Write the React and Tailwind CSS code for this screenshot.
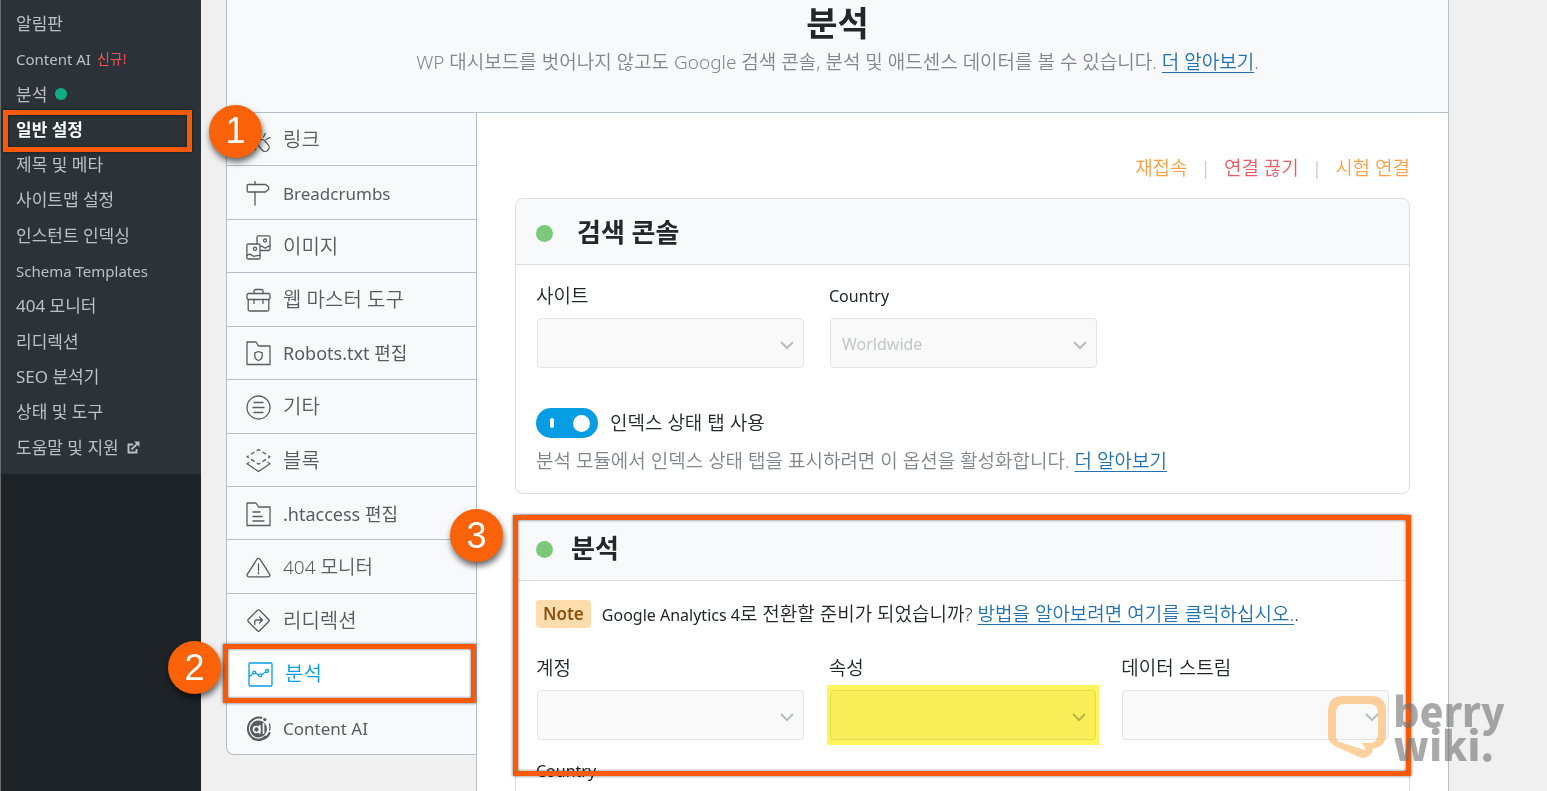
import React from 'react';

const submenu = [
  { label: '알림판' },
  { label: 'Content AI', latin: true, isNew: true },
  { label: '분석', dot: true },
  { label: '일반 설정', active: true },
  { label: '제목 및 메타' },
  { label: '사이트맵 설정' },
  { label: '인스턴트 인덱싱' },
  { label: 'Schema Templates', latin: true },
  { label: '404 모니터' },
  { label: '리디렉션' },
  { label: 'SEO 분석기' },
  { label: '상태 및 도구' },
  { label: '도움말 및 지원', external: true },
];

const tabs = [
  { label: '링크', icon: 'link', size: 'text-[20px] font-[350]' },
  { label: 'Breadcrumbs', icon: 'signpost', size: 'text-[17px]' },
  { label: '이미지', icon: 'images', size: 'text-[20px] font-[350]' },
  { label: '웹 마스터 도구', icon: 'toolbox', size: 'text-[20px] font-[350]' },
  { label: 'Robots.txt 편집', icon: 'robots', size: 'text-[18px]' },
  { label: '기타', icon: 'misc', size: 'text-[20px] font-[350]' },
  { label: '블록', icon: 'blocks', size: 'text-[20px] font-[350]' },
  { label: '.htaccess 편집', icon: 'htaccess', size: 'text-[18px]' },
  { label: '404 모니터', icon: 'warning', size: 'text-[19px] font-[350]' },
  { label: '리디렉션', icon: 'redirect', size: 'text-[20px] font-[350]' },
  { label: '분석', icon: 'analytics', size: 'text-[20px] font-[350]', active: true },
  { label: 'Content AI', icon: 'ai', size: 'text-[17px]' },
];

const iconShapes = {
  link: (
    <>
      <rect x="13.500" y="11" width="8" height="13" rx="4" transform="rotate(-40 17.500 17.500)" />
      <path d="M17.500 9l1.800-3.500M20 11.500l4-1.800M9 17v5" />
    </>
  ),
  signpost: (
    <>
      <path d="M9 .5v3M9 11v13" />
      <path d="M2.200 3.500h17.300L22.600 6v2.500L19.500 11H2.200a1 1 0 0 1-1-1V4.500a1 1 0 0 1 1-1z" />
    </>
  ),
  images: (
    <>
      <path d="M11 8.500V2.200A1.300 1.300 0 0 1 12.300.900h10.400A1.300 1.300 0 0 1 24 2.200v12a1.300 1.300 0 0 1-1.300 1.300H14.500" />
      <circle cx="19" cy="5.500" r="1.500" />
      <path d="M14.500 11.500c1.500-1.500 3 1.500 4.500 1.500s2.500-2 5-2" />
      <rect x=".9" y="9" width="13.100" height="15" rx="1.300" />
      <circle cx="9" cy="13.800" r="1.600" />
      <path d="M1 20.500c2.500-3 4.500-.5 6 .5s3.500-1 7-.5" />
    </>
  ),
  toolbox: (
    <>
      <path d="M8 5.500V3.200C8 2 8.500 1.500 9.500 1.500h6c1 0 1.500.5 1.500 1.700v2.300" />
      <rect x="1" y="5.500" width="23" height="6" rx="1.500" />
      <path d="M2.200 11.500v10c0 1 .5 1.500 1.500 1.500h17.600c1 0 1.500-.5 1.500-1.500v-10M8 11.500v4M17 11.500v4" />
    </>
  ),
  robots: (
    <>
      <path d="M1 23.500V1h9l2.500 4H24v18.500z" />
      <path d="M12.500 10.500l3.700 1.300v3.500c0 2-1.700 3.400-3.700 4.200-2-.8-3.700-2.200-3.700-4.200v-3.500z" />
    </>
  ),
  misc: (
    <>
      <circle cx="12.500" cy="12.500" r="11.500" />
      <path d="M8 7.500h9M7 12.500h11M8 17.500h9" />
    </>
  ),
  blocks: (
    <>
      <path d="M12.500 1.500L24 8.800l-11.500 7.400L1 8.800z" strokeDasharray="4.200 2.600" strokeDashoffset="2" strokeLinecap="butt" />
      <path d="M3 14.500l-2 1.300 11.500 7.700L24 15.800l-2-1.300" />
    </>
  ),
  htaccess: (
    <>
      <path d="M1 23.500V1h9l2.500 4H24v18.500z" />
      <path d="M7 10h7M7 14.500h9M7 19h11" />
    </>
  ),
  warning: (
    <>
      <path d="M10.900 4.300c.8-1.300 2.400-1.300 3.200 0l9.500 14.800c.8 1.300 0 2.700-1.500 2.700H2.900c-1.500 0-2.300-1.400-1.500-2.700z" />
      <path d="M12.500 9v6.500M12.500 17.200v1.600" />
    </>
  ),
  redirect: (
    <>
      <rect x="4.500" y="4.500" width="16" height="16" rx="1.500" transform="rotate(45 12.500 12.500)" />
      <path d="M8.800 16.500V13.500c0-1 .5-1.500 1.500-1.500h6M13.500 9l3 3-3 3" />
    </>
  ),
  analytics: (
    <>
      <rect x="1" y="1" width="23" height="23" rx="1" />
      <path d="M1.500 14.500l3.700-3M7.500 11l3.200 2M13.800 12.500l4-2.500" />
      <circle cx="6.300" cy="10.500" r="1.400" />
      <circle cx="12.300" cy="13.300" r="1.500" />
      <circle cx="19" cy="9" r="1.500" />
    </>
  ),
  ai: (
    <>
      <path d="M15.500 1.800A11.200 11.200 0 1 0 23.500 17" strokeWidth="2" />
      <path d="M23.400 8a11.500 11.500 0 0 1 .3 6" />
      <circle cx="12.500" cy="13" r="8.500" fill="currentColor" stroke="none" />
      <circle cx="18.800" cy="3.600" r="1.700" fill="currentColor" stroke="none" />
      <circle cx="10.500" cy="13.500" r="3" stroke="#f8f9fb" strokeWidth="1.700" />
      <path d="M13.800 10v7M17.500 11v6M17.500 8v1.500" stroke="#f8f9fb" strokeWidth="1.800" />
      <path d="M7 22.500c4 1.800 9 1.300 12.500-2" strokeWidth="2" />
    </>
  ),
};

const TabIcon = ({ name }) => (
  <svg
    viewBox="0 0 25 25"
    className="size-[25px] shrink-0"
    fill="none"
    stroke="currentColor"
    strokeWidth="1.3"
    strokeLinecap="round"
    strokeLinejoin="round"
    aria-hidden="true"
  >
    {iconShapes[name]}
  </svg>
);

const Badge = ({ number, className }) => (
  <span
    className={`absolute z-20 flex size-[53px] items-center justify-center rounded-full bg-[#f96209] font-['Liberation_Sans',sans-serif] text-[36px] leading-none font-normal text-white shadow-[1px_4px_6px_rgba(0,0,0,0.6)] ${className}`}
  >
    {number}
  </span>
);

const Outline = ({ className }) => (
  <span
    className={`pointer-events-none absolute z-10 border-5 border-[#f95a08] shadow-[0_0_3px_rgba(0,0,0,0.6),inset_0_0_3px_rgba(0,0,0,0.6)] ${className}`}
  />
);

const Sidebar = () => (
  <aside className="w-[201px] shrink-0 border-l border-[#6b6b6b] bg-[#1d2327]">
    <ul className="grid h-[474px] auto-rows-fr bg-[#2c3338] pt-[6px] pb-[9px]">
      {submenu.map((item) => (
        <li key={item.label} className="relative flex items-center pl-[15px]">
          <a
            href="#"
            className={`flex items-center whitespace-nowrap ${item.latin ? 'text-[15px]' : 'text-[17px]'} ${
              item.active ? 'font-bold text-white' : 'text-[#bcc0c4]'
            }`}
          >
            {item.label}
            {item.isNew && <span className="ml-1.5 text-[14px] text-[#f0545a]">신규!</span>}
            {item.dot && <span className="ml-2 size-3 rounded-full bg-[#10ac84]" />}
            {item.external && (
              <svg viewBox="0 0 13 13" className="ml-2 size-[13px]" fill="none" stroke="currentColor" strokeWidth="1.900" aria-hidden="true">
                <path d="M6 3.500H1.500v8h8V8" />
                <path d="M4.500 8.500L11 2" />
                <path d="M7 .5h5.500V6z" fill="currentColor" stroke="none" />
              </svg>
            )}
          </a>
          {item.active && (
            <>
              <Outline className="-top-[2px] right-[9px] -bottom-[5px] left-[2px]" />
              <Badge number="1" className="-top-[7px] -right-[61px]" />
            </>
          )}
        </li>
      ))}
    </ul>
  </aside>
);

const SettingsTabs = () => (
  <nav className="w-[250px] shrink-0">
    <ul className="grid h-[642px] auto-rows-fr rounded-bl-lg border-b border-l border-[#b5bfc9] bg-[#f8f9fb]">
      {tabs.map((tab) => (
        <li
          key={tab.label}
          className={`relative border-b border-[#b5bfc9] last:border-b-0 ${
            tab.active ? 'bg-white text-[#069de3]' : 'text-[#5a5b60]'
          }`}
        >
          <a
            href="#"
            className={`flex h-full items-center gap-3 pt-[2px] whitespace-nowrap ${tab.size} ${
              tab.active ? 'pl-[21px]' : 'pl-[19px]'
            }`}
          >
            <TabIcon name={tab.icon} />
            {tab.label}
          </a>
          {tab.active && (
            <>
              <Outline className="-inset-y-[3px] right-0 -left-[4px]" />
              <Badge number="2" className="-top-[6px] -left-[59px]" />
            </>
          )}
        </li>
      ))}
    </ul>
  </nav>
);

const SelectField = ({ id, label, value, latin, highlighted }) => (
  <div className="w-[268px]">
    <label htmlFor={id} className={`block leading-[30px] ${latin ? 'text-[16px] font-normal' : 'text-[19px]'}`}>
      {label}
    </label>
    <div className="relative mt-[7px] ml-px">
      <select
        id={id}
        disabled
        className="h-[50px] w-full appearance-none rounded border border-[#e3e4e6] bg-[#f9f9f9] px-[11px] pt-[2px] text-[16px] font-normal text-[#c4c6c8] opacity-100"
      >
        <option>{value || ''}</option>
      </select>
      <svg
        viewBox="0 0 14 9"
        className="pointer-events-none absolute top-[23px] right-[10px] h-[9px] w-[14px]"
        fill="none"
        stroke="#b9bcbf"
        strokeWidth="2"
        aria-hidden="true"
      >
        <path d="M1 1l6 6 6-6" />
      </svg>
      {highlighted && (
        <span className="pointer-events-none absolute -inset-x-[3px] -inset-y-[5px] bg-[#fff45a] mix-blend-multiply" />
      )}
    </div>
  </div>
);

const PanelHeader = ({ title, className }) => (
  <div className="flex h-[66px] items-center rounded-t-lg border-b border-[#dadde0] bg-[#f8f9fb] pt-1 pl-5">
    <span className="size-[17px] rounded-full bg-[#7ac97a]" />
    <h2 className={`pb-1 text-[26px] leading-none font-bold text-[#23262a] ${className}`}>{title}</h2>
  </div>
);

const link = 'text-[#2271b1] underline underline-offset-3';

const SearchConsolePanel = () => (
  <section className="rounded-lg border border-[#dadde0]">
    <PanelHeader title="검색 콘솔" className="ml-6" />
    <div className="px-5 pt-[16px] pb-[17px]">
      <div className="flex flex-wrap gap-[25px]">
        <SelectField id="console-site" label="사이트" />
        <SelectField id="console-country" label="Country" value="Worldwide" latin />
      </div>
      <label className="mt-10 flex h-[30px] items-center gap-3">
        <input
          type="checkbox"
          role="switch"
          defaultChecked
          className="relative h-[30px] w-[62px] appearance-none rounded-full bg-[#069de3] before:absolute before:top-[10px] before:left-[14px] before:h-[10px] before:w-1 before:rounded-sm before:bg-white after:absolute after:top-[7px] after:right-2 after:size-[17px] after:rounded-full after:bg-white"
        />
        인덱스 상태 탭 사용
      </label>
      <p className="mt-2 leading-[30px] text-[#7f868d]">
        분석 모듈에서 인덱스 상태 탭을 표시하려면 이 옵션을 활성화합니다.{' '}
        <a href="#" className={link}>더 알아보기</a>
      </p>
    </div>
  </section>
);

const AnalyticsPanel = () => (
  <section className="relative mt-5 rounded-lg border border-[#dadde0]">
    <PanelHeader title="분석" className="ml-[18px]" />
    <div className="px-5 pt-[18px] pb-10">
      <p className="flex h-[30px] items-center">
        <span className="mr-[11px] rounded bg-[#ffdcae] px-[7px] text-[17px] leading-7 font-semibold text-[#8a5210]">Note</span>
        <span>
          <span className="text-[16px] font-normal">Google Analytics 4</span>로 전환할 준비가 되었습니까?{' '}
          <a href="#" className={link}>방법을 알아보려면 여기를 클릭하십시오.</a>.
        </span>
      </p>
      <div className="mt-[24px] flex gap-[25px]">
        <SelectField id="ga-account" label="계정" />
        <SelectField id="ga-property" label="속성" highlighted />
        <SelectField id="ga-stream" label="데이터 스트림" />
      </div>
      <div className="mt-4">
        <SelectField id="ga-country" label="Country" value="Worldwide" latin />
      </div>
    </div>
    <Outline className="top-0 -right-[2px] -left-[3px] h-[261px]" />
    <Badge number="3" className="-top-[6px] -left-[66px]" />
  </section>
);

const Watermark = () => (
  <div className="pointer-events-none absolute right-[42px] bottom-[30px] z-30 flex items-center gap-[7px]">
    <svg viewBox="0 0 58 62" className="h-[62px] w-[58px]" fill="#ffab4f" fillOpacity="0.55" fillRule="evenodd" aria-hidden="true">
      <path d="M15 0h28q15 0 15 15v23q0 13-13 14.500-1 6.500-7 9-3 1-7-.5L11 52Q0 48 0 40V15Q0 0 15 0zM17 8q-9 0-9 9v24q0 3 4 5l26 8.500q-1-4-4.500-7.500H40q10 0 10-10V17q0-9-9-9z" />
    </svg>
    <p className="font-['Noto_Sans_CJK_KR',sans-serif] text-[40px] leading-[34px] font-black text-[#6f7072]/60">
      berry
      <br />
      wiki.
    </p>
  </div>
);

const App = () => (
  <div className="relative flex h-screen overflow-hidden bg-[#f0f0f1] font-['Noto_Sans','Noto_Sans_CJK_KR',sans-serif]">
    <Sidebar />
    <main className="mr-[98px] ml-[25px] min-w-0 flex-1">
      <header className="border-x border-b border-[#b5bfc9] bg-[#f8f9fb] pt-1 pb-[34px] text-center">
        <h1 className="text-[34px] leading-[38px] font-bold text-[#23262a]">분석</h1>
        <p className="mt-[4px] text-[19px] leading-8 font-[350] text-[#7f868d]">
          WP 대시보드를 벗어나지 않고도 Google 검색 콘솔, 분석 및 애드센스 데이터를 볼 수 있습니다.{' '}
          <a href="#" className={link}>더 알아보기</a>.
        </p>
      </header>
      <div className="flex">
        <SettingsTabs />
        <div className="min-w-0 flex-1 border-x border-[#b5bfc9] bg-white px-[38px] pt-[40px] pb-10 text-[19px] font-[350] text-[#23262a]">
          <div className="mb-[15px] flex h-[30px] items-center justify-end gap-[13px]">
            <a href="#" className="text-[#ff9f43]">재접속</a>
            <span className="text-[#b5bfc9]">|</span>
            <a href="#" className="text-[#ee5a5f]">연결 끊기</a>
            <span className="text-[#b5bfc9]">|</span>
            <a href="#" className="text-[#ff9f43]">시험 연결</a>
          </div>
          <SearchConsolePanel />
          <AnalyticsPanel />
        </div>
      </div>
    </main>
    <Watermark />
  </div>
);

export default App;
